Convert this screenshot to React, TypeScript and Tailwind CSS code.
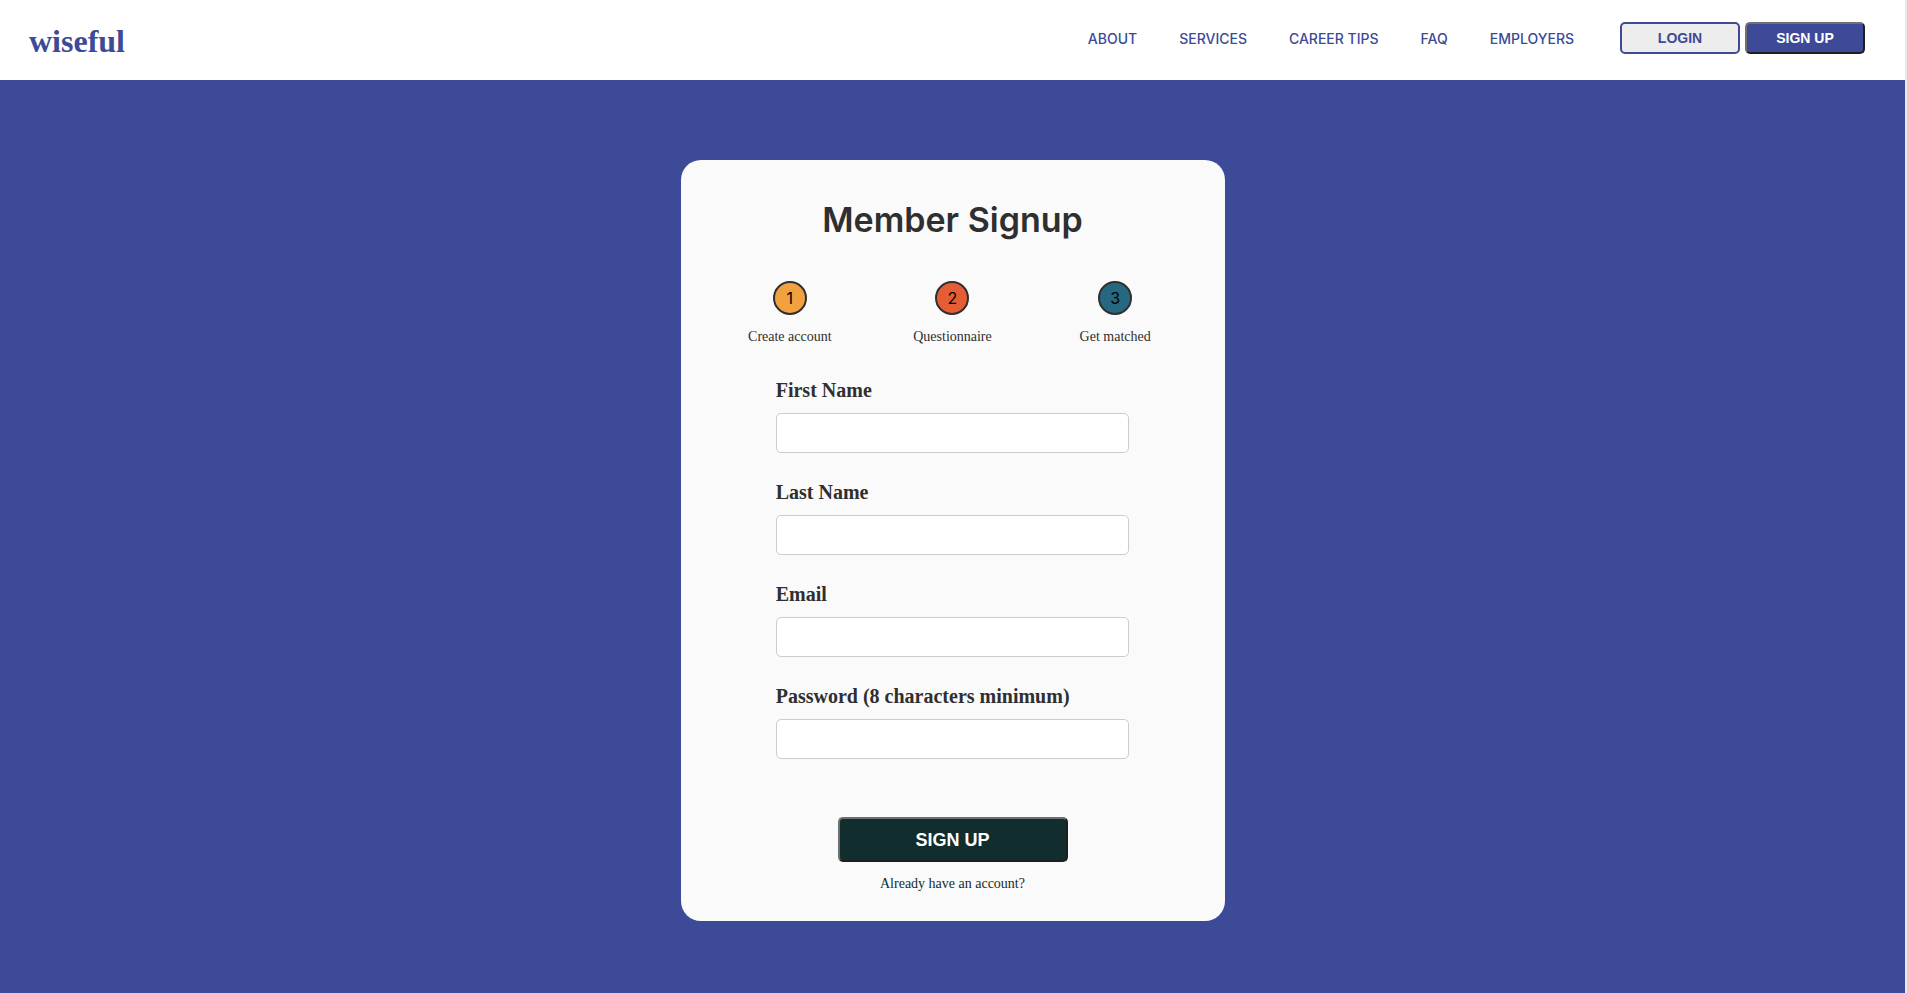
const NAV_LINKS = ["About", "Services", "Career Tips", "FAQ", "Employers"];

const STEPS = [
  { number: 1, label: "Create account", color: "bg-[#f1a13f]" },
  { number: 2, label: "Questionnaire", color: "bg-[#e65d34]" },
  { number: 3, label: "Get matched", color: "bg-[#266880]" },
];

const FIELDS = [
  { id: "first-name", label: "First Name", type: "text" },
  { id: "last-name", label: "Last Name", type: "text" },
  { id: "email", label: "Email", type: "email" },
  { id: "password", label: "Password (8 characters minimum)", type: "password" },
];

function Header() {
  return (
    <header className="flex h-20 items-center justify-between bg-white pr-10 pl-[29px] text-[#3c4a97]">
      <a href="#home" className="pt-0.5 text-[32px] leading-10 font-bold">
        wiseful
      </a>
      <div className="flex items-center pb-1">
        <nav className="mr-[46px] flex gap-[42px] pt-0.5 font-['Inter',sans-serif] text-sm leading-5 font-medium uppercase">
          {NAV_LINKS.map((link) => (
            <a key={link} href="#nav">
              {link}
            </a>
          ))}
        </nav>
        <div className="flex gap-[5px] font-['Liberation_Sans',sans-serif] text-sm font-bold">
          <button
            type="button"
            className="h-8 w-[120px] rounded-[5px] border-2 border-[#3c4a97] bg-[#ededed]"
          >
            LOGIN
          </button>
          <button
            type="button"
            className="h-8 w-[120px] rounded-[5px] border-2 border-t-[#707070] border-r-[#1e1e1e] border-b-[#1e1e1e] border-l-[#707070] bg-[#3c4a97] text-white"
          >
            SIGN UP
          </button>
        </div>
      </div>
    </header>
  );
}

function Steps() {
  return (
    <ol className="mx-7 grid grid-cols-3">
      {STEPS.map((step) => (
        <li key={step.number} className="flex flex-col items-center gap-[13px]">
          <span
            className={`flex size-[34px] items-center justify-center rounded-full border-2 border-[#2f2f2f] font-['Inter',sans-serif] text-base text-black ${step.color}`}
          >
            {step.number}
          </span>
          <span className="text-sm leading-[18px]">{step.label}</span>
        </li>
      ))}
    </ol>
  );
}

export default function App() {
  return (
    <div className="min-h-screen border-r-2 border-[#e8e8e8] bg-[#3c4a97] font-['Liberation_Serif',serif] text-[#2f2f2f]">
      <Header />
      <main className="flex justify-center px-4 pt-20 pb-18">
        <section className="w-full max-w-[544px] rounded-[20px] bg-[#fafafa] pt-9 pb-7">
          <h1 className="text-center font-['Inter',sans-serif] text-[34px] leading-[48px] font-semibold">
            Member Signup
          </h1>
          <div className="mt-[37px]">
            <Steps />
          </div>
          <form className="mt-8 flex flex-col items-center">
            <div className="flex w-[65%] flex-col gap-[27px]">
              {FIELDS.map((field) => (
                <div key={field.id} className="flex flex-col gap-[11px]">
                  <label htmlFor={field.id} className="text-xl leading-6 font-bold">
                    {field.label}
                  </label>
                  <input
                    id={field.id}
                    type={field.type}
                    className="h-10 w-full rounded-[5px] border border-[#cccccc] bg-white px-3"
                  />
                </div>
              ))}
            </div>
            <button
              type="submit"
              className="mt-[58px] h-[45px] w-[230px] rounded-[5px] border-2 border-t-[#707070] border-r-[#1e1e1e] border-b-[#1e1e1e] border-l-[#707070] bg-[#112d2e] font-['Liberation_Sans',sans-serif] text-lg font-bold text-white"
            >
              SIGN UP
            </button>
            <a href="#login" className="mt-[13px] text-sm leading-[18px] text-[#112d2e]">
              Already have an account?
            </a>
          </form>
        </section>
      </main>
    </div>
  );
}
